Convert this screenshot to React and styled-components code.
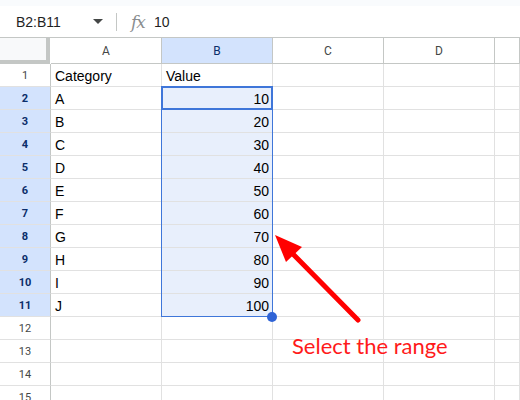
import styled, { createGlobalStyle } from "styled-components";

const GlobalStyle = createGlobalStyle`
html, body {
    margin: 0;
    padding: 0;
    background: white;
    font-family: "Liberation Sans", Arial, sans-serif;
}
`

const Page = styled.div`
width: 520px;
height: 400px;
overflow: hidden;
position: relative;
`

const TopStrip = styled.div`
height: 6px;
background-color: #f9fbfd;
`

const FormulaBar = styled.div`
height: 31px;
display: flex;
align-items: center;
font-size: 14px;
color: #1f1f1f;
`

const NameBox = styled.div`
width: 116px;
padding: 0 13px 0 16px;
box-sizing: border-box;
display: flex;
align-items: center;
justify-content: space-between;
`

const Caret = styled.span`
width: 0;
height: 0;
border-left: 5px solid transparent;
border-right: 5px solid transparent;
border-top: 5px solid #444746;
`

const Divider = styled.span`
width: 1px;
height: 18px;
background-color: #c4c7c5;
margin-right: 14px;
`

const Fx = styled.span`
font-family: "DejaVu Serif", serif;
font-style: italic;
color: #8a8d8f;
font-size: 17px;
margin-right: 9px;
letter-spacing: -1px;
`

const Sheet = styled.div`
position: relative;
border-top: 1px solid #c4c7c5;
display: grid;
grid-template-columns: 51px repeat(4, 111px) 1fr;
grid-template-rows: 26px;
grid-auto-rows: 23px;
`

const Corner = styled.div`
background-color: #f8f9fa;
border-right: 4px solid #c4c7c5;
border-bottom: 4px solid #c4c7c5;
box-sizing: border-box;
width: 50px;
`

const ColHead = styled.div`
box-sizing: border-box;
border-right: 1px solid #c4c7c5;
border-bottom: 1px solid #c4c7c5;
display: flex;
align-items: center;
justify-content: center;
font-family: Roboto, "Liberation Sans", sans-serif;
font-size: 12px;
color: ${({$active}) => $active ? "#0b2e6a" : "#444746"};
background-color: ${({$active}) => $active ? "#d3e3fd" : "white"};
`

const RowHead = styled.div`
box-sizing: border-box;
border-right: 1px solid #c4c7c5;
border-bottom: 1px solid #e1e1e1;
display: flex;
align-items: center;
justify-content: center;
font-family: Roboto, "Liberation Sans", sans-serif;
font-size: 11px;
font-weight: ${({$active}) => $active ? 700 : 400};
color: ${({$active}) => $active ? "#0b2e6a" : "#444746"};
background-color: ${({$active}) => $active ? "#d3e3fd" : "white"};
`

const Cell = styled.div`
box-sizing: border-box;
border-right: 1px solid #e1e1e1;
border-bottom: 1px solid #e1e1e1;
display: flex;
align-items: flex-end;
padding: 0 3px 2px 4px;
justify-content: ${({$num}) => $num ? "flex-end" : "flex-start"};
font-size: 14px;
color: #000;
background-color: ${({$selected}) => $selected ? "#e8effc" : "white"};
`

const Selection = styled.div`
position: absolute;
left: 161px;
top: 48px;
width: 112px;
height: 231px;
box-sizing: border-box;
border: 1px solid #3f76d9;
pointer-events: none;
`

const ActiveCell = styled.div`
position: absolute;
left: 161px;
top: 48px;
width: 112px;
height: 24px;
box-sizing: border-box;
border: 2px solid #3f76d9;
`

const Handle = styled.div`
position: absolute;
left: 267px;
top: 274px;
width: 10px;
height: 10px;
border-radius: 50%;
background-color: #2f63d6;
`

const Callout = styled.svg`
position: absolute;
left: 0;
top: 0;
pointer-events: none;
`

const CalloutText = styled.div`
position: absolute;
left: 292px;
top: 332px;
font-family: Lato, "Liberation Sans", sans-serif;
font-size: 22px;
color: #ff1a1a;
white-space: nowrap;
`

const COLUMNS = ["A", "B", "C", "D", ""];
const ROWS = [
    ["Category", "Value"],
    ["A", 10], ["B", 20], ["C", 30], ["D", 40], ["E", 50],
    ["F", 60], ["G", 70], ["H", 80], ["I", 90], ["J", 100],
    ["", ""], ["", ""], ["", ""], ["", ""],
];

export default function App(){
    return(
        <>
            <GlobalStyle />
            <Page>
                <TopStrip />
                <FormulaBar>
                    <NameBox>B2:B11<Caret /></NameBox>
                    <Divider />
                    <Fx>fx</Fx>
                    <span>10</span>
                </FormulaBar>
                <Sheet>
                    <Corner />
                    {COLUMNS.map((col, i) => (
                        <ColHead key={"h" + i} $active={col === "B"}>{col}</ColHead>
                    ))}
                    {ROWS.map((row, r) => {
                        const selected = r >= 1 && r <= 10;
                        return [
                            <RowHead key={"r" + r} $active={selected}>{r + 1}</RowHead>,
                            <Cell key={"a" + r}>{row[0]}</Cell>,
                            <Cell key={"b" + r} $selected={selected} $num={typeof row[1] === "number"}>{row[1]}</Cell>,
                            <Cell key={"c" + r} />,
                            <Cell key={"d" + r} />,
                            <Cell key={"e" + r} />,
                        ];
                    })}
                    <Selection />
                    <ActiveCell />
                    <Handle />
                </Sheet>
                <Callout width="520" height="400">
                    <line x1="358" y1="320" x2="290" y2="251" stroke="#ff0000" strokeWidth="5" strokeLinecap="round" />
                    <polygon points="275,235 302,247 286,262" fill="#ff0000" />
                </Callout>
                <CalloutText>Select the range</CalloutText>
            </Page>
        </>
    )
}
